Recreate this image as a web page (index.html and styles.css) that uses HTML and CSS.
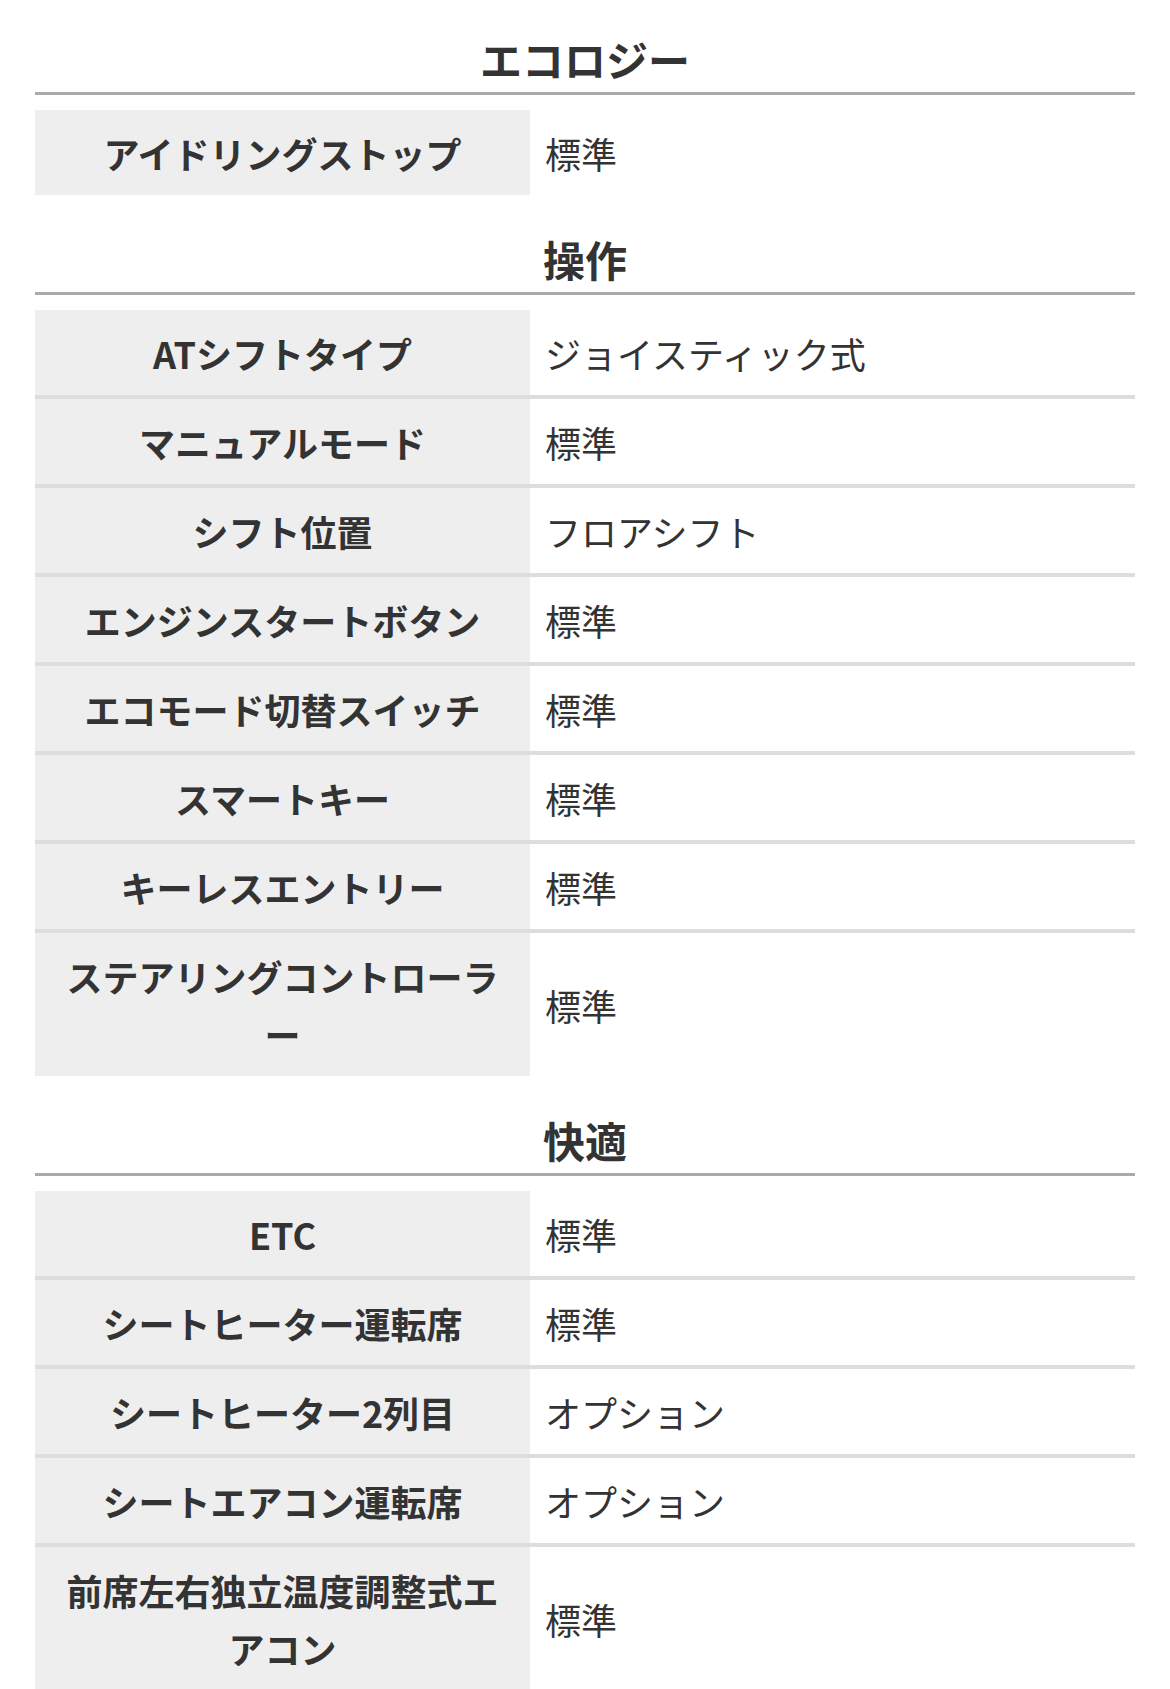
FILE: index.html
```html
<!DOCTYPE html>
<html lang="ja">
<head>
<meta charset="utf-8">
<link rel="stylesheet" href="styles.css">
</head>
<body>
<div class="page">
  <section class="spec">
    <h2 class="spec-title">エコロジー</h2>
    <div class="spec-table">
      <div class="row"><div class="label">アイドリングストップ</div><div class="value">標準</div></div>
    </div>
  </section>
  <section class="spec">
    <h2 class="spec-title">操作</h2>
    <div class="spec-table">
      <div class="row"><div class="label">ATシフトタイプ</div><div class="value">ジョイスティック式</div></div>
      <div class="row"><div class="label">マニュアルモード</div><div class="value">標準</div></div>
      <div class="row"><div class="label">シフト位置</div><div class="value">フロアシフト</div></div>
      <div class="row"><div class="label">エンジンスタートボタン</div><div class="value">標準</div></div>
      <div class="row"><div class="label">エコモード切替スイッチ</div><div class="value">標準</div></div>
      <div class="row"><div class="label">スマートキー</div><div class="value">標準</div></div>
      <div class="row"><div class="label">キーレスエントリー</div><div class="value">標準</div></div>
      <div class="row"><div class="label">ステアリングコントローラー</div><div class="value">標準</div></div>
    </div>
  </section>
  <section class="spec">
    <h2 class="spec-title">快適</h2>
    <div class="spec-table">
      <div class="row"><div class="label">ETC</div><div class="value">標準</div></div>
      <div class="row"><div class="label">シートヒーター運転席</div><div class="value">標準</div></div>
      <div class="row"><div class="label">シートヒーター2列目</div><div class="value">オプション</div></div>
      <div class="row"><div class="label">シートエアコン運転席</div><div class="value">オプション</div></div>
      <div class="row"><div class="label">前席左右独立温度調整式エアコン</div><div class="value">標準</div></div>
    </div>
  </section>
</div>
</body>
</html>
```
FILE: styles.css
```css
html, body {
  margin: 0;
  padding: 0;
  background: #fff;
}
body {
  font-family: "Noto Sans CJK JP", "Noto Sans", sans-serif;
  color: #333;
}
.page {
  padding: 25px 35px 0;
}
.spec + .spec {
  margin-top: 30px;
}
.spec-title {
  margin: 0 0 15px;
  font-size: 42px;
  line-height: 67px;
  font-weight: 700;
  text-align: center;
  border-bottom: 3px solid #aaa;
}
.row {
  display: grid;
  grid-template-columns: 45% 55%;
  font-size: 36px;
  line-height: 58px;
}
.row + .row {
  border-top: 4px solid #ddd;
}
.label {
  background: #eee;
  font-weight: 700;
  text-align: center;
  padding: 13.5px 15px;
}
.value {
  padding: 13.5px 15px;
  display: flex;
  align-items: center;
}
```
